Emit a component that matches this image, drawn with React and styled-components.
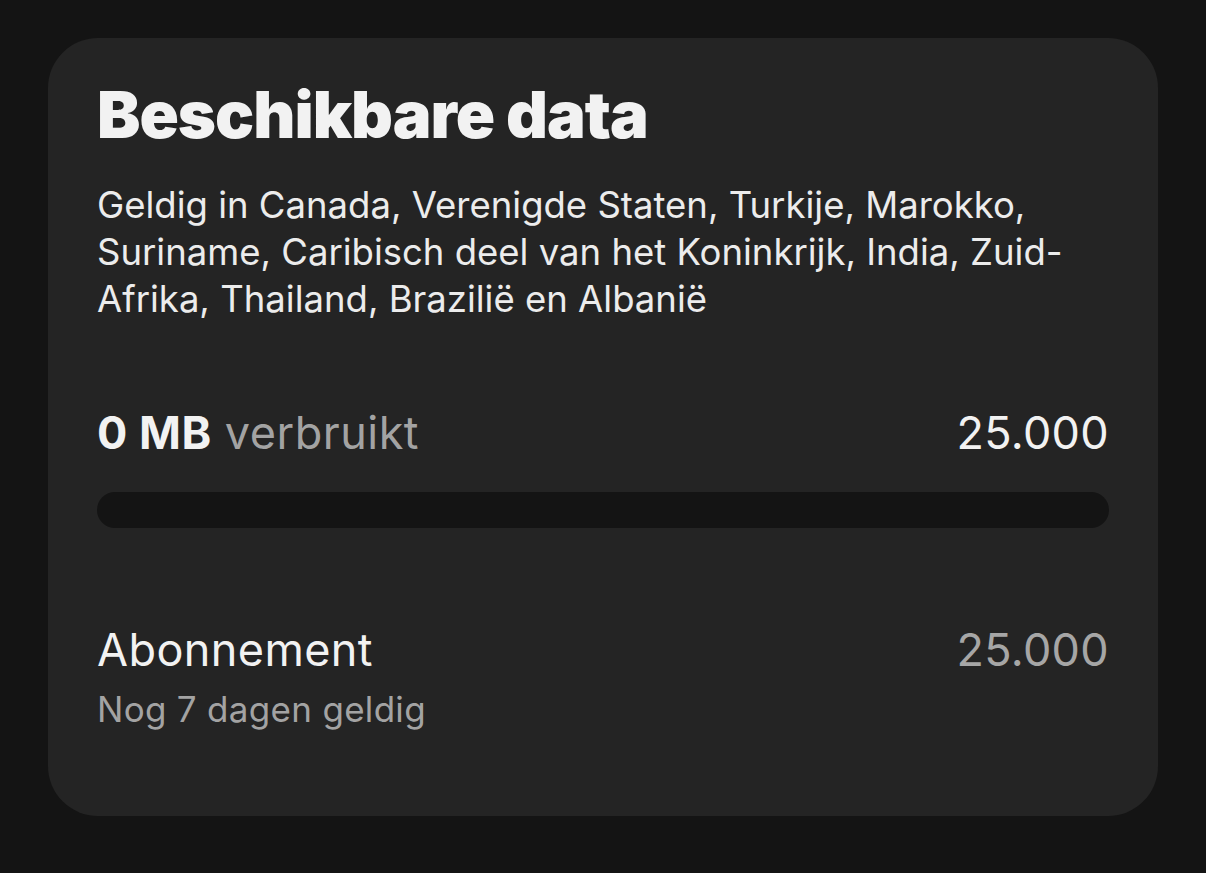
import React from 'react';
import styled, { createGlobalStyle } from 'styled-components';

const GlobalStyle = createGlobalStyle`
  html, body {
    margin: 0;
    padding: 0;
    background: #141414;
  }
  body {
    font-family: Inter, "Noto Sans", sans-serif;
    -webkit-font-smoothing: antialiased;
  }
`;

const Page = styled.div`
  min-height: 873px;
  padding: 38px 48px 0;
  box-sizing: border-box;
`;

const Card = styled.section`
  background: #242424;
  border-radius: 50px;
  height: 778px;
  box-sizing: border-box;
  padding: 39px 49px 0 49px;
  display: flex;
  flex-direction: column;
`;

const Title = styled.h2`
  margin: 0;
  font-family: Inter, Lato, sans-serif;
  font-weight: 900;
  font-size: 65px;
  line-height: 76px;
  color: #f2f2f2;
  letter-spacing: -1px;
`;

const Description = styled.p`
  margin: 29px 0 0;
  font-size: 36.5px;
  line-height: 47px;
  color: #ececec;
`;

const UsageRow = styled.div`
  display: flex;
  justify-content: space-between;
  align-items: baseline;
  margin-top: 82px;
`;

const Usage = styled.span`
  font-size: 45px;
  line-height: 56px;
  letter-spacing: 0.5px;
  color: #a3a3a3;

  strong {
    font-weight: 700;
    color: #f2f2f2;
  }
`;

const Amount = styled.span`
  font-size: 45px;
  line-height: 56px;
  letter-spacing: 0.3px;
  color: ${(p) => (p.$muted ? '#a6a6a6' : '#f2f2f2')};
`;

const Track = styled.div`
  margin-top: 31px;
  height: 36px;
  border-radius: 18px;
  background: #141414;
  overflow: hidden;
`;

const Fill = styled.div`
  height: 100%;
  background: #f2f2f2;
`;

const PlanRow = styled.div`
  display: flex;
  justify-content: space-between;
  align-items: baseline;
  margin-top: 94px;
`;

const PlanName = styled.span`
  font-size: 45px;
  line-height: 56px;
  letter-spacing: 0.4px;
  color: #f2f2f2;
`;

const PlanNote = styled.div`
  margin-top: 9px;
  font-size: 35px;
  line-height: 44px;
  letter-spacing: 0.3px;
  color: #a3a3a3;
`;

export default function App() {
  const used = 0;
  const total = 25000;
  return (
    <>
      <GlobalStyle />
      <Page>
        <Card>
          <Title>Beschikbare data</Title>
          <Description>
            Geldig in Canada, Verenigde Staten, Turkije, Marokko,<br />
            Suriname, Caribisch deel van het Koninkrijk, India, Zuid-<br />
            Afrika, Thailand, Brazilië en Albanië
          </Description>
          <UsageRow>
            <Usage><strong>0 MB</strong> verbruikt</Usage>
            <Amount>25.000</Amount>
          </UsageRow>
          <Track>
            <Fill style={{ width: `${(used / total) * 100}%` }} />
          </Track>
          <PlanRow>
            <PlanName>Abonnement</PlanName>
            <Amount $muted>25.000</Amount>
          </PlanRow>
          <PlanNote>Nog 7 dagen geldig</PlanNote>
        </Card>
      </Page>
    </>
  );
}
